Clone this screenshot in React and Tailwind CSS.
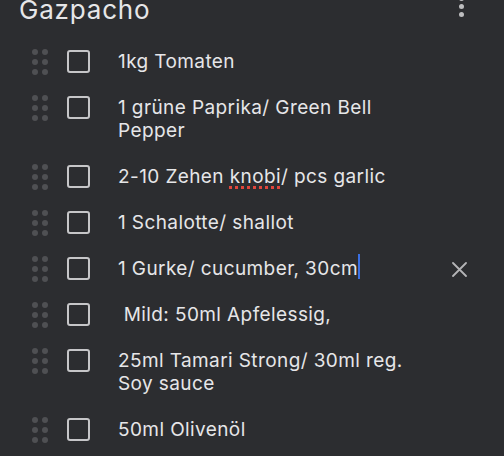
import React from "react";

const items = [
  { text: "1kg Tomaten" },
  { text: "1 grüne Paprika/ Green Bell Pepper" },
  { text: "garlic" },
  { text: "1 Schalotte/ shallot" },
  { text: "cucumber" },
  { text: "\u00a0Mild: 50ml Apfelessig," },
  { text: "25ml Tamari Strong/ 30ml reg. Soy sauce" },
  { text: "50ml Olivenöl" },
];

function Handle() {
  return (
    <div className="grid h-[23px] w-[16px] shrink-0 grid-cols-2 content-center gap-x-[4px] gap-y-[4px]">
      {[0, 1, 2, 3, 4, 5].map((i) => (
        <span key={i} className="block h-[6px] w-[6px] rounded-full bg-[#4f5053]" />
      ))}
    </div>
  );
}

function Checkbox() {
  return (
    <div className="flex h-[23px] w-[23px] shrink-0 items-center">
      <span className="block h-[23px] w-[23px] rounded-[3px] border-[2.5px] border-[#c6c6c8]" />
    </div>
  );
}

function ItemText({ item }) {
  if (item.text === "garlic") {
    return (
      <span>
        2-10 Zehen{" "}
        <span className="underline decoration-dotted decoration-[#e0463c] decoration-[2.5px] underline-offset-[3px]">
          knobi
        </span>
        / pcs garlic
      </span>
    );
  }
  if (item.text === "cucumber") {
    return (
      <span>
        1 Gurke/ cucumber, 30cm
        <span className="relative">
          <span className="absolute left-0 top-[-3px] h-[25px] w-[2px] bg-[#3a6fe3]" />
        </span>
      </span>
    );
  }
  return <span>{item.text}</span>;
}

export default function App() {
  return (
    <div
      className="h-[456px] w-[504px] overflow-hidden bg-[#2c2d30] text-[#e6e6e8]"
      style={{ fontFamily: "Inter, 'Noto Sans', sans-serif" }}
    >
      <div className="flex h-[38px] items-start justify-between pl-[19px] pr-[40px]">
        <div className="-mt-[3px] text-[26px] leading-[26px] tracking-[0.8px]">Gazpacho</div>
        <div className="-mt-[4px] flex flex-col gap-[3px]">
          <span className="block h-[5px] w-[5px] rounded-full bg-[#bdbdbf]" />
          <span className="block h-[5px] w-[5px] rounded-full bg-[#bdbdbf]" />
          <span className="block h-[5px] w-[5px] rounded-full bg-[#bdbdbf]" />
        </div>
      </div>
      <div className="flex flex-col">
        {items.map((item, i) => (
          <div key={i} className="flex items-start pb-[11px] pl-[32px] pt-[12px]">
            <Handle />
            <div className="w-[19px] shrink-0" />
            <Checkbox />
            <div className="w-[28px] shrink-0" />
            <div className="w-[310px] text-[19px] leading-[23px] tracking-[0.4px]">
              <ItemText item={item} />
            </div>
            {item.text === "cucumber" && (
              <div className="ml-[24px] flex h-[23px] items-center pt-[2px]">
                <svg width="15" height="15" viewBox="0 0 15 15">
                  <path d="M1 1L14 14M14 1L1 14" stroke="#b4b4b6" strokeWidth="1.8" strokeLinecap="round" />
                </svg>
              </div>
            )}
          </div>
        ))}
      </div>
    </div>
  );
}
